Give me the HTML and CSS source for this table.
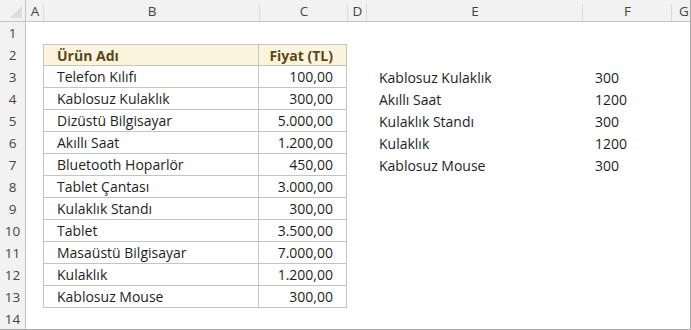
FILE: index.html
```
<!DOCTYPE html>
<html lang="tr">
<head>
<meta charset="utf-8">
<link rel="stylesheet" href="styles.css">
</head>
<body>
<div class="sheet">
  <div class="colheads">
    <div class="corner"><span class="tri"></span></div>
    <div class="ch w-a">A</div>
    <div class="ch w-b">B</div>
    <div class="ch w-c">C</div>
    <div class="ch w-d">D</div>
    <div class="ch w-e">E</div>
    <div class="ch w-f">F</div>
    <div class="ch w-g">G</div>
  </div>
  <div class="body">
    <div class="rownums">
      <div class="rn">1</div><div class="rn">2</div><div class="rn">3</div><div class="rn">4</div>
      <div class="rn">5</div><div class="rn">6</div><div class="rn">7</div><div class="rn">8</div>
      <div class="rn">9</div><div class="rn">10</div><div class="rn">11</div><div class="rn">12</div>
      <div class="rn">13</div><div class="rn">14</div>
    </div>
    <div class="grid">
      <div class="blank"></div>

      <div></div><div class="t tl th top">Ürün Adı</div><div class="t tr th top num">Fiyat (TL)</div><div></div><div></div><div></div><div></div>

      <div></div><div class="t tl">Telefon Kılıfı</div><div class="t tr num">100,00</div><div></div><div class="txt">Kablosuz Kulaklık</div><div class="txt">300</div><div></div>
      <div></div><div class="t tl">Kablosuz Kulaklık</div><div class="t tr num">300,00</div><div></div><div class="txt">Akıllı Saat</div><div class="txt">1200</div><div></div>
      <div></div><div class="t tl">Dizüstü Bilgisayar</div><div class="t tr num">5.000,00</div><div></div><div class="txt">Kulaklık Standı</div><div class="txt">300</div><div></div>
      <div></div><div class="t tl">Akıllı Saat</div><div class="t tr num">1.200,00</div><div></div><div class="txt">Kulaklık</div><div class="txt">1200</div><div></div>
      <div></div><div class="t tl">Bluetooth Hoparlör</div><div class="t tr num">450,00</div><div></div><div class="txt">Kablosuz Mouse</div><div class="txt">300</div><div></div>
      <div></div><div class="t tl">Tablet Çantası</div><div class="t tr num">3.000,00</div><div></div><div></div><div></div><div></div>
      <div></div><div class="t tl">Kulaklık Standı</div><div class="t tr num">300,00</div><div></div><div></div><div></div><div></div>
      <div></div><div class="t tl">Tablet</div><div class="t tr num">3.500,00</div><div></div><div></div><div></div><div></div>
      <div></div><div class="t tl">Masaüstü Bilgisayar</div><div class="t tr num">7.000,00</div><div></div><div></div><div></div><div></div>
      <div></div><div class="t tl">Kulaklık</div><div class="t tr num">1.200,00</div><div></div><div></div><div></div><div></div>
      <div></div><div class="t tl">Kablosuz Mouse</div><div class="t tr num">300,00</div><div></div><div></div><div></div><div></div>

      <div class="blank"></div>
    </div>
  </div>
</div>
</body>
</html>
```
FILE: styles.css
```
* { box-sizing: border-box; }
html, body { margin: 0; padding: 0; background: #fff; }
body {
  font-family: "Open Sans", "Noto Sans", sans-serif;
  color: #1e1e1e;
  width: 691px;
  height: 330px;
  overflow: hidden;
}
.sheet {
  width: 691px;
  height: 330px;
  border-right: 1px solid #a8a8a8;
  border-bottom: 1px solid #a8a8a8;
  overflow: hidden;
}
.colheads {
  display: flex;
  height: 22px;
  background: #f2f2f2;
  border-bottom: 1px solid #c4c4c4;
}
.corner {
  width: 26px;
  flex: none;
  position: relative;
  border-right: 1px solid #c4c4c4;
}
.tri {
  position: absolute;
  right: 3px;
  bottom: 3px;
  width: 0;
  height: 0;
  border-left: 12px solid transparent;
  border-bottom: 12px solid #dcdcdc;
}
.ch {
  flex: none;
  display: flex;
  align-items: center;
  justify-content: center;
  font-size: 13.5px;
  color: #444;
  position: relative;
}
.ch::after {
  content: "";
  position: absolute;
  right: 0;
  top: 4px;
  bottom: 0;
  width: 1px;
  background: #dadada;
}
.w-a { width: 18px; }
.w-b { width: 216px; }
.w-c { width: 88px; }
.w-d { width: 19px; }
.w-e { width: 216px; }
.w-f { width: 89px; }
.w-g { width: 24px; }
.body {
  display: flex;
}
.rownums {
  width: 26px;
  flex: none;
  background: #f2f2f2;
  border-right: 1px solid #c4c4c4;
}
.rn {
  height: 22px;
  display: flex;
  align-items: center;
  justify-content: center;
  font-size: 13.5px;
  color: #444;
}
.grid {
  display: grid;
  grid-template-columns: 17px 216px 88px 19px 216px 89px 24px;
  grid-auto-rows: 22px;
  font-size: 14px;
}
.blank { grid-column: 1 / -1; }
.grid > div {
  display: flex;
  align-items: center;
  white-space: nowrap;
}
.t {
  border-bottom: 1px solid #c4c4c4;
  padding: 0 13px;
}
.tl { border-left: 1px solid #c4c4c4; border-right: 1px solid #c4c4c4; }
.tr { border-right: 1px solid #c4c4c4; }
.top { border-top: 1px solid #c4c4c4; }
.th {
  background: #fdf4de;
  font-weight: 700;
  color: #5a4718;
}
.num { justify-content: flex-end; }
.txt { padding-left: 13px; }
```
